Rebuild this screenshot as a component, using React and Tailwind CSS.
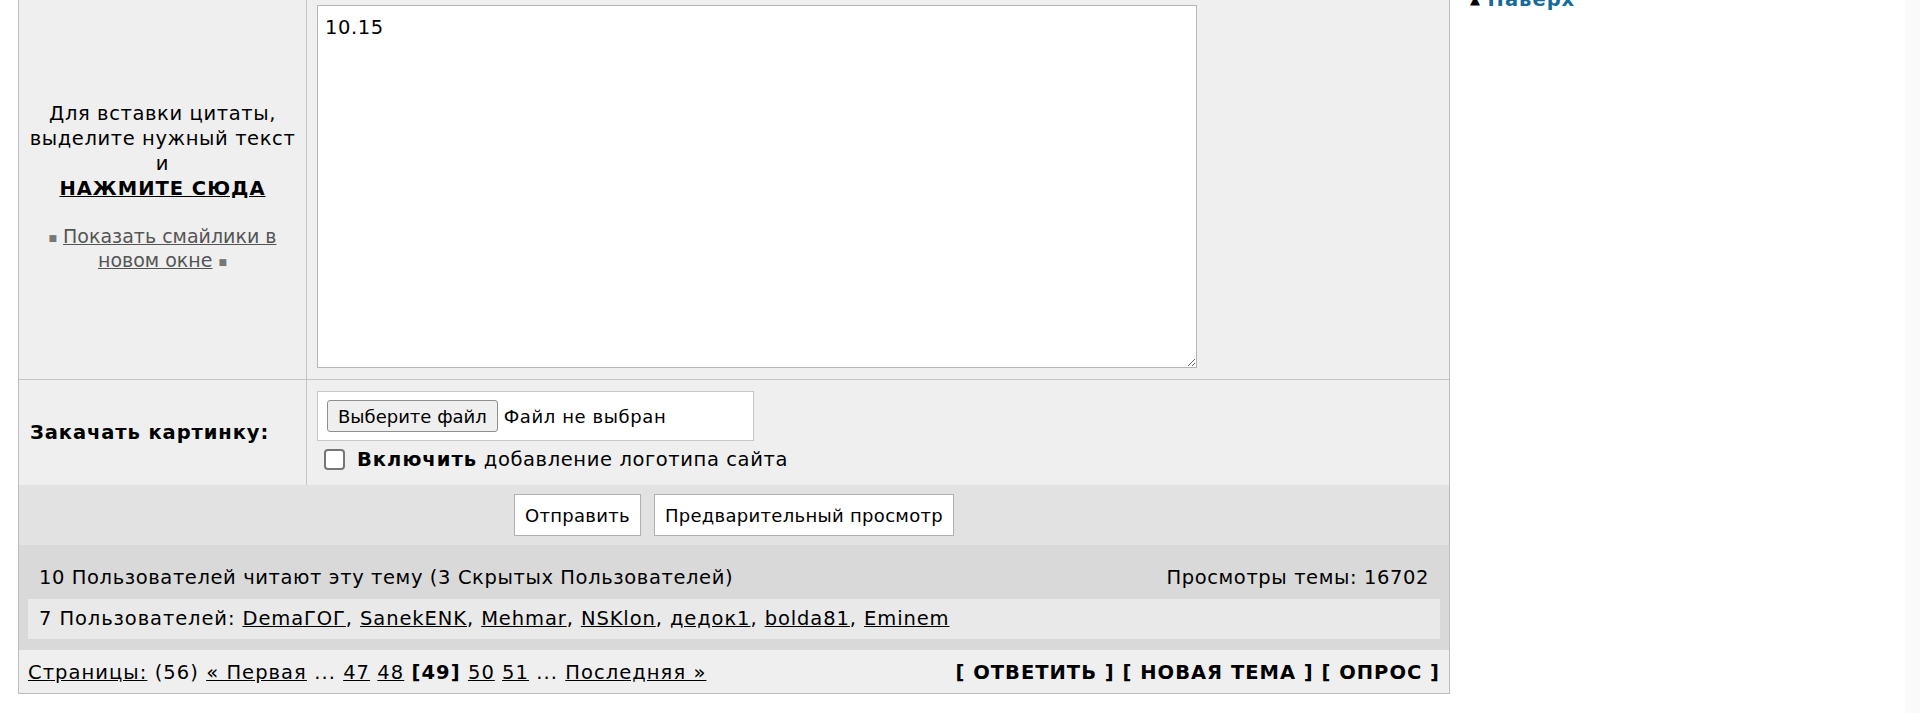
const users = ['DemaГОГ', 'SanekENK', 'Mehmar', 'NSKlon', 'дедок1', 'bolda81', 'Eminem'];

const Bullet = () => <span className="align-[2px] text-[9px] text-[#777]">■</span>;

export default function App() {
  return (
    <div className="flex min-h-[713px] bg-white font-['DejaVu_Sans',Verdana,sans-serif] text-[19.5px] tracking-[0.6px] text-black">
      {/* Reply form */}
      <div className="ml-[18px] w-[1432px] shrink-0">
        <div className="border-x border-b border-[#bdbdbd]">
          {/* Message row */}
          <div className="flex h-[380px] border-b border-[#c4c4c4] bg-[#efefef]">
            <div className="flex w-[288px] shrink-0 flex-col items-center justify-center border-r border-[#c4c4c4] px-[10px] pb-[5px] text-center leading-[25px]">
              <div>
                Для вставки цитаты,
                <br />
                выделите нужный текст
                <br />и
                <br />
                <a href="#" className="font-bold tracking-[1px] underline">НАЖМИТЕ СЮДА</a>
              </div>
              <div className="mt-[24px] text-[19px] leading-[22px] tracking-normal text-[#555]">
                <Bullet />{' '}
                <a href="#" className="underline">Показать смайлики в новом окне</a>{' '}
                <Bullet />
              </div>
            </div>
            <div className="pl-[10px] pt-[5px]">
              <textarea
                defaultValue="10.15"
                className="block h-[363px] w-[880px] border border-[#b5b5b5] bg-white px-[7px] py-[7px] font-['DejaVu_Sans',Verdana,sans-serif] text-[19.5px] tracking-[0.6px] text-black outline-none"
              />
            </div>
          </div>

          {/* Upload row */}
          <div className="flex h-[105px] bg-[#efefef]">
            <div className="flex w-[288px] shrink-0 items-center border-r border-[#c4c4c4] pl-[11px] pt-[1px] font-bold tracking-[0.9px]">
              Закачать картинку:
            </div>
            <div className="flex flex-col pl-[10px] pt-[11px]">
              <div className="flex h-[50px] w-[437px] items-center gap-[6px] border border-[#c8c8c8] bg-white px-[9px] text-[18px] tracking-normal">
                <span className="flex h-[32px] items-center rounded-[3px] border border-[#8f8f8f] bg-[#efefef] px-[10px]">
                  Выберите файл
                </span>
                <span className="tracking-[0.6px]">Файл не выбран</span>
              </div>
              <label className="mt-[4px] flex items-center gap-[12px]">
                <span className="ml-[7px] h-[21px] w-[21px] rounded-[4px] border-2 border-[#767676] bg-white" />
                <span>
                  <b className="tracking-[1px]">Включить</b> добавление логотипа сайта
                </span>
              </label>
            </div>
          </div>

          {/* Submit buttons */}
          <div className="flex h-[60px] items-center justify-center gap-[13px] bg-[#e2e2e2] text-[18px] tracking-[0.3px]">
            <button className="h-[42px] border border-[#b0b0b0] bg-white px-[10px]">Отправить</button>
            <button className="h-[42px] border border-[#b0b0b0] bg-white px-[10px]">Предварительный просмотр</button>
          </div>

          {/* Who is reading */}
          <div className="bg-[#d9d9d9] px-[9px] pb-[11px] pt-[20px]">
            <div className="flex items-center justify-between px-[11px] leading-[26px]">
              <span>10 Пользователей читают эту тему (3 Скрытых Пользователей)</span>
              <span>Просмотры темы: 16702</span>
            </div>
            <div className="mt-[8px] flex h-[40px] items-center bg-[#e9e9e9] px-[11px] tracking-[0.9px]">
              <span>
                7 Пользователей:{' '}
                {users.map((u, i) => (
                  <span key={u}>
                    <a href="#" className="underline">{u}</a>
                    {i < users.length - 1 ? ', ' : ''}
                  </span>
                ))}
              </span>
            </div>
          </div>

          {/* Pages + actions */}
          <div className="flex h-[43px] items-center justify-between bg-[#efefef] px-[9px] pt-[3px]">
            <span className="tracking-[1.05px]">
              <a href="#" className="underline">Страницы:</a> (56) <a href="#" className="underline">« Первая</a> ...{' '}
              <a href="#" className="underline">47</a> <a href="#" className="underline">48</a>{' '}
              <b>[49]</b> <a href="#" className="underline">50</a>{' '}
              <a href="#" className="underline">51</a> ... <a href="#" className="underline">Последняя »</a>
            </span>
            <span className="font-bold tracking-[1px]">
              [ <a href="#">ОТВЕТИТЬ</a> ] [ <a href="#">НОВАЯ ТЕМА</a> ] [ <a href="#">ОПРОС</a> ]
            </span>
          </div>
        </div>
      </div>

      {/* Side column */}
      <div className="flex-1 pl-[20px]">
        <div className="-mt-[12px] flex items-center gap-[7px] leading-[24px]">
          <span className="text-[13px]">▲</span>
          <a href="#" className="font-bold tracking-[1px] text-[#166a9c]">Наверх</a>
        </div>
      </div>
      <div className="w-[15px] bg-[#fafafa]" />
    </div>
  );
}
